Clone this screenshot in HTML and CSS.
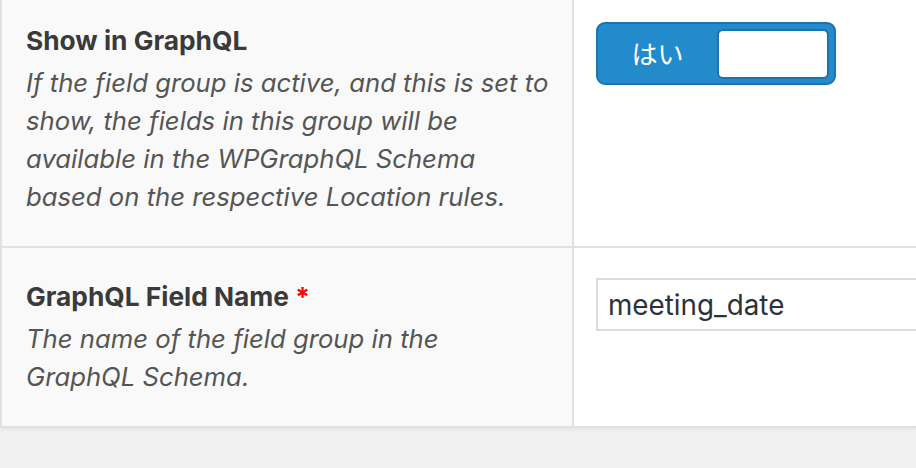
FILE: index.html
```html
<!DOCTYPE html>
<html lang="ja">
<head>
<meta charset="utf-8">
<title>ACF GraphQL settings</title>
<link rel="stylesheet" href="styles.css">
</head>
<body>
<div class="fields">
  <div class="row">
    <div class="label">
      <div class="title">Show in GraphQL</div>
      <p class="desc">If the field group is active, and this is set to<br>show, the fields in this group will be<br>available in the WPGraphQL Schema<br>based on the respective Location rules.</p>
    </div>
    <div class="value">
      <div class="switch">
        <span class="switch-on">はい</span>
        <span class="switch-slider"></span>
      </div>
    </div>
  </div>
  <div class="row">
    <div class="label">
      <div class="title">GraphQL Field Name <span class="req">*</span></div>
      <p class="desc">The name of the field group in the<br>GraphQL Schema.</p>
    </div>
    <div class="value">
      <input class="text-input" type="text" value="meeting_date">
    </div>
  </div>
</div>
</body>
</html>
```

FILE: styles.css
```css
html, body {
  margin: 0;
  padding: 0;
}
body {
  background: #f0f0f1;
  width: 916px;
  height: 468px;
  overflow: hidden;
  font-family: "Inter", sans-serif;
}
.fields {
  margin-top: -8px;
  background: #fff;
  border-left: 2px solid #e1e1e1;
  border-bottom: 2px solid #e1e1e1;
  box-shadow: 0 2px 2px rgba(0, 0, 0, 0.04);
}
.row {
  display: grid;
  grid-template-columns: 572px 1fr;
}
.row + .row {
  border-top: 2px solid #e1e1e1;
}
.label {
  box-sizing: border-box;
  background: #f9f9f9;
  border-right: 2px solid #e1e1e1;
  padding: 30px 20px 30px 24px;
}
.title {
  font-size: 26.3px;
  font-weight: 700;
  line-height: 38px;
  color: #3a3a3a;
  white-space: nowrap;
}
.req {
  color: #f00;
}
.desc {
  margin: 4px 0 0;
  font-size: 25.7px;
  font-style: italic;
  line-height: 38px;
  color: #555;
  white-space: nowrap;
}
.value {
  min-width: 0;
  overflow: hidden;
  padding: 30px 0 0 22px;
}
.switch {
  box-sizing: border-box;
  display: flex;
  width: 240px;
  height: 63px;
  background: #238acb;
  border: 2px solid #1d72b0;
  border-radius: 9px;
}
.switch-on {
  flex: 1;
  display: flex;
  align-items: center;
  justify-content: center;
  color: #fff;
  font-family: "Noto Sans CJK JP", sans-serif;
  font-size: 26px;
  padding-bottom: 2px;
}
.switch-slider {
  box-sizing: border-box;
  width: 112px;
  height: 50px;
  margin: 5px 5px 0 0;
  background: #fff;
  border: 2px solid #1d72b0;
  border-radius: 6px;
}
.text-input {
  box-sizing: border-box;
  display: block;
  width: 360px;
  height: 53px;
  margin: 0;
  padding: 0 10px;
  border: 2px solid #dcdcde;
  border-radius: 0;
  background: #fff;
  color: #2c3338;
  font-family: "Inter", sans-serif;
  font-size: 27.8px;
  outline: none;
}
```
